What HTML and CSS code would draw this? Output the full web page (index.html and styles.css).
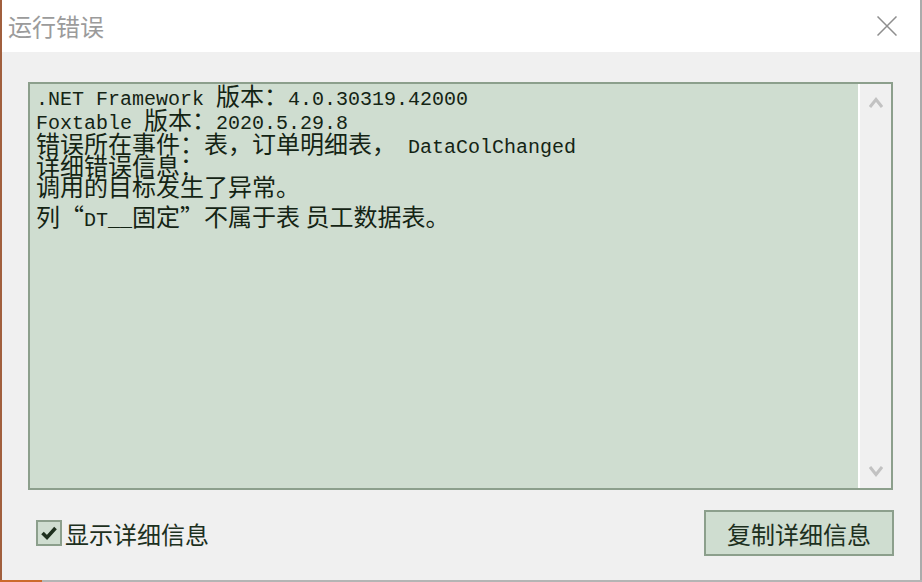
FILE: index.html
```html
<!DOCTYPE html>
<html lang="zh-CN">
<head>
<meta charset="utf-8">
<title>运行错误</title>
<link rel="stylesheet" href="styles.css">
</head>
<body>
<div class="window">
  <div class="frame">
    <div class="titlebar">
      <span class="title">运行错误</span>
      <svg class="close" width="20" height="20" viewBox="0 0 20 20"><path d="M0.5 0.5L19.5 19.5M19.5 0.5L0.5 19.5" stroke="#8e8e8e" stroke-width="1.5" fill="none"/></svg>
    </div>
    <div class="content">
      <div class="textbox">
        <div class="text">
          <div class="ln ln-en">.NET Framework <span class="c">版本：</span>4.0.30319.42000</div>
          <div class="ln ln-en">Foxtable <span class="c">版本：</span>2020.5.29.8</div>
          <div class="ln ln-m"><span class="c">错误所在事件：表，订单明细表，</span> DataColChanged</div>
          <div class="ln ln-s"><span class="c">详细错误信息：</span></div>
          <div class="ln ln-last"><span class="c">调用的目标发生了异常。</span></div>
          <div class="ln"><span class="c">列“</span>DT__<span class="c">固定”不属于表 员工数据表。</span></div>
        </div>
        <div class="scrollbar">
          <svg width="14" height="12" viewBox="0 0 14 12"><path d="M1 11L7 3.5L13 11" stroke="#c2c2c2" stroke-width="3" fill="none"/></svg>
          <svg width="14" height="12" viewBox="0 0 14 12"><path d="M1 1L7 8.5L13 1" stroke="#c2c2c2" stroke-width="3" fill="none"/></svg>
        </div>
      </div>
      <div class="footer">
        <label class="check">
          <span class="box"><svg width="22" height="22" viewBox="0 0 22 22"><path d="M4.5 11L9 15.5L17.5 6" stroke="#1e301e" stroke-width="3.6" fill="none"/></svg></span>
          <span class="label">显示详细信息</span>
        </label>
        <div class="btn">复制详细信息</div>
      </div>
    </div>
  </div>
  <div class="bottom"><span class="bottom-accent"></span><span class="bottom-rest"></span></div>
</div>
</body>
</html>
```
FILE: styles.css
```css
html, body {
  margin: 0;
  padding: 0;
  width: 922px;
  height: 582px;
  overflow: hidden;
  background: #f0f0f0;
}
.window {
  width: 922px;
  height: 582px;
  display: flex;
  flex-direction: column;
  box-sizing: border-box;
}
.frame {
  flex: 1;
  display: flex;
  flex-direction: column;
  border-left: 2px solid #a15f3d;
  border-right: 2px solid #ababab;
  background: #f0f0f0;
}
.titlebar {
  height: 52px;
  background: #ffffff;
  display: flex;
  align-items: center;
  justify-content: space-between;
  padding: 0 23px 0 6px;
}
.title {
  font-family: "Noto Sans CJK SC", sans-serif;
  font-size: 24px;
  color: #9b9b9b;
  line-height: 52px;
}
.close {
  display: block;
  margin-top: -1px;
}
.content {
  flex: 1;
  display: flex;
  flex-direction: column;
  padding: 30px 27px 0 26px;
}
.textbox {
  height: 408px;
  box-sizing: border-box;
  border: 2px solid #8c9f8c;
  background: #cfddd0;
  display: flex;
}
.text {
  flex: 1;
  padding: 6px 0 0 6px;
  font-family: "Liberation Mono", "DejaVu Sans Mono", monospace;
  font-size: 20px;
  color: #142414;
}
.ln {
  line-height: 20px;
  height: 20px;
  white-space: pre;
}
.ln-en {
  margin-bottom: 4px;
}
.ln-m {
  margin-bottom: 2px;
}
.ln-s {
  margin-bottom: 1px;
}
.ln-last {
  margin-bottom: 10px;
}
.c {
  font-family: "Noto Sans CJK SC", sans-serif;
  font-size: 24px;
  line-height: 0;
}
.scrollbar {
  width: 31px;
  border-left: 2px solid #ffffff;
  background: #f0f0f0;
  display: flex;
  flex-direction: column;
  justify-content: space-between;
  align-items: center;
  padding: 12px 0 10px;
}
.scrollbar svg {
  display: block;
}
.footer {
  margin-top: 20px;
  height: 46px;
  display: flex;
  align-items: center;
  justify-content: space-between;
  padding-left: 8px;
}
.check {
  display: flex;
  align-items: center;
  gap: 3px;
}
.box {
  width: 26px;
  height: 26px;
  box-sizing: border-box;
  border: 2px solid #8c9f8c;
  background: #cfddd0;
  display: flex;
  align-items: center;
  justify-content: center;
}
.box svg {
  display: block;
}
.label, .btn {
  font-family: "Noto Sans CJK SC", sans-serif;
  font-size: 24px;
  color: #1d301e;
}
.btn {
  width: 190px;
  height: 46px;
  box-sizing: border-box;
  border: 2px solid #8c9f8c;
  background: #cfddd0;
  display: flex;
  align-items: center;
  justify-content: center;
  margin-right: -1px;
}
.bottom {
  height: 2px;
  display: flex;
}
.bottom-accent {
  width: 42px;
  background: #cc6a2c;
}
.bottom-rest {
  flex: 1;
  background: #b4b4b4;
}
```
